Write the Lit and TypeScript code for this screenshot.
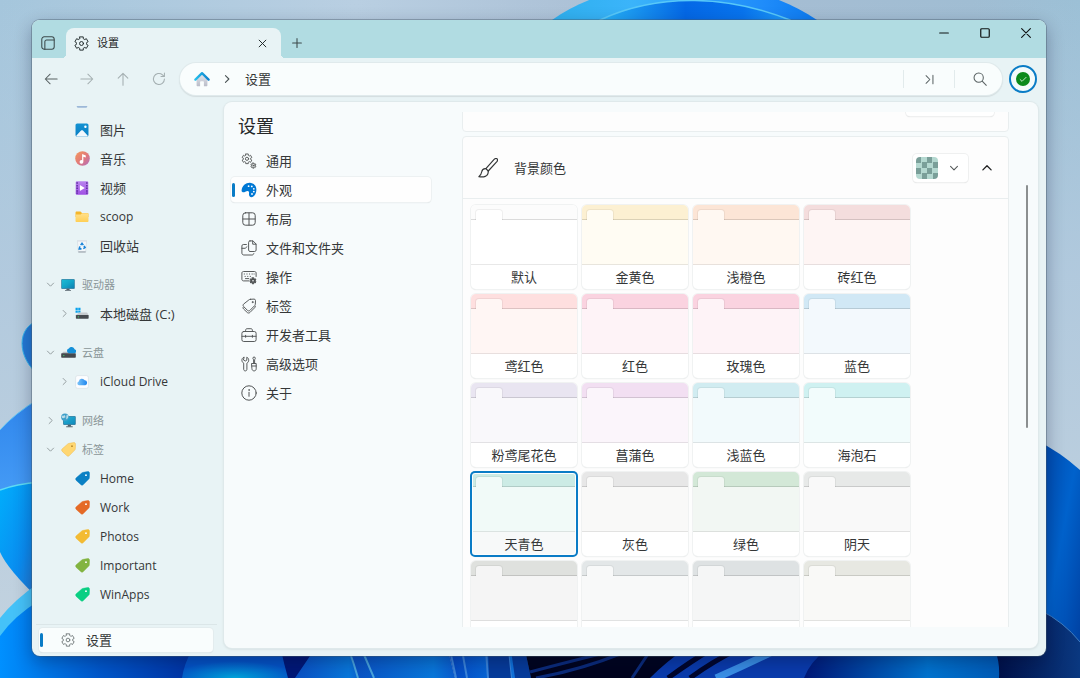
import { LitElement, html, svg, css, nothing, type TemplateResult } from "lit";
import { customElement, property, state } from "lit/decorators.js";
import { classMap } from "lit/directives/class-map.js";
import { styleMap } from "lit/directives/style-map.js";

/* ---------- shared styles ---------- */

const base = css`
  *,
  *::before,
  *::after {
    box-sizing: border-box;
  }
  :host {
    font-family: "Open Sans", "Noto Sans CJK SC", sans-serif;
    font-size: 13px;
    line-height: 20px;
    color: #353738;
  }
  button {
    font: inherit;
    color: inherit;
    margin: 0;
    padding: 0;
    border: 0;
    background: none;
    text-align: left;
  }
  ul {
    list-style: none;
    margin: 0;
    padding: 0;
  }
  svg {
    display: block;
    flex: none;
  }
`;

/* ---------- icons ---------- */

const line = (body: TemplateResult, size = 16, width = 1) => html`
  <svg width=${size} height=${size} viewBox="0 0 16 16" fill="none" stroke="currentColor"
    stroke-width=${width} stroke-linecap="round" stroke-linejoin="round" aria-hidden="true">${body}</svg>`;

const art = (body: TemplateResult, size = 14) => html`
  <svg width=${size} height=${size} viewBox="0 0 16 16" aria-hidden="true">${body}</svg>`;

/** Outline of a six-toothed gear round (cx, cy). */
function gear(cx: number, cy: number, outer: number, inner: number): string {
  const at = (deg: number, r: number) => {
    const a = (deg * Math.PI) / 180;
    return `${(cx + r * Math.cos(a)).toFixed(2)} ${(cy + r * Math.sin(a)).toFixed(2)}`;
  };
  let d = "";
  for (let i = 0; i < 6; i++) {
    const m = i * 60 - 90;
    d += `${i ? "L" : "M"}${at(m - 15, outer)}L${at(m + 15, outer)}L${at(m + 20, inner)}Q${at(m + 30, inner - 0.2)} ${at(m + 40, inner)}`;
  }
  return d + "Z";
}

const gearIcon = (size: number) =>
  line(svg`<path d=${gear(8, 8, 7.3, 5.5)}/><circle cx="8" cy="8" r="2.1"/>`, size);

const chevron = {
  down: (size = 10, w = 1.6) => line(svg`<path d="M2.5 5.5 8 11l5.500-5.500"/>`, size, w),
  up: (size = 10, w = 1.6) => line(svg`<path d="M2.500 10.500 8 5l5.500 5.500"/>`, size, w),
  right: (size = 10, w = 1.6) => line(svg`<path d="M5.500 2.500 11 8l-5.500 5.500"/>`, size, w),
};

const navIcon: Record<string, TemplateResult> = {
  general: line(svg`
    <path d=${gear(6, 5.8, 5, 3.7)}/><circle cx="6" cy="5.800" r="1.600"/>
    <path d=${gear(12.4, 12.6, 2.6, 1.7)}/><circle cx="12.400" cy="12.600" r=".5"/>`, 16, 0.9),
  appearance: art(svg`
    <path d="M.6 8.600C1 3.600 5 .6 9 .8c3.600.2 6.400 3 6.400 6.800 0 4.200-2.200 7.600-4.800 7.600-2.200 0-2.800-1.800-2.600-3.600.2-1.500 0-2.600-1.400-2.700-1.500-.1-2.100 1.100-3.500 1.300C1.600 10.400.5 9.800.6 8.600Z" fill="#0078d4"/>
    <g fill="#fff"><circle cx="7.600" cy="4.200" r=".9"/><circle cx="10.800" cy="4.400" r=".9"/><circle cx="12.800" cy="6.800" r=".9"/><circle cx="12.800" cy="9.600" r=".9"/><circle cx="11" cy="12" r=".9"/></g>`, 16),
  layout: line(svg`<rect x="1.800" y="1.800" width="12.400" height="12.400" rx="2.600"/><path d="M8 2v12M2 8h12"/>`),
  files: line(svg`
    <path d="M9 .9h3l3.100 3.100v6.100c0 .8-.6 1.400-1.400 1.400H9c-.8 0-1.400-.6-1.400-1.400V2.300C7.600 1.500 8.200.9 9 .9Z"/>
    <path d="M11.700 1v3.200h3.200"/>
    <path d="M5.400 4.500H2.300C1.500 4.500.9 5.100.9 5.900V13c0 1.200.8 2 2 2h8c1 0 1.700-.5 1.900-1.400M.9 8.300h3.300L6 6.700"/>`, 16, 0.95),
  actions: line(svg`
    <path d="M8.200 11.900H2.400C1.600 11.900.9 11.200.9 10.400V4c0-.8.700-1.500 1.500-1.500h11.200c.8 0 1.500.7 1.500 1.500v3.500"/>
    <path d="M3.200 5h.3M5.800 5h.3M8.400 5h.3M11 5h.3M13 5h.2M4 7.400h.3M6.600 7.400h.3M9.200 7.400h.3M4.500 9.600h3.300"/>
    <path d=${gear(12, 11.8, 3.1, 2.2)} fill="currentColor"/><circle cx="12" cy="11.800" r=".8" fill="#f7fbfc" stroke="none"/>`, 16, 0.95),
  tags: line(svg`
    <path d="M9.500 1.300 13.100 1.100c.8 0 1.400.6 1.400 1.400l-.2 3.800c0 .5-.3 1-.6 1.300l-4.800 4.800c-.7.700-1.700.7-2.400 0L2.600 8.500c-.7-.7-.7-1.700 0-2.400l5.300-4.200c.4-.4 1-.6 1.600-.6Z"/>
    <path d="M2 9.500c0 .6.200 1.100.6 1.500l3.700 3.500c.7.700 1.900.7 2.600 0l4.700-4.700c.4-.4.600-.9.700-1.500"/>
    <circle cx="11.600" cy="4.100" r=".5"/>`, 16, 0.95),
  developer: line(svg`
    <rect x=".9" y="4.500" width="14.200" height="10" rx="1.800"/>
    <path d="M4.600 4.300V3.200c0-.9.600-1.500 1.500-1.500h3.800c.9 0 1.500.6 1.500 1.500v1.100M1 9.300h14M4.600 8.300v2M11.400 8.300v2"/>`, 16, 0.95),
  advanced: line(svg`
    <path d="M2.800 1.200C1.500 1.800.9 2.900.9 4.200c0 1.400.8 2.400 1.800 3v6.100c0 1 .7 1.600 1.600 1.600s1.600-.6 1.600-1.600V7.200c1-.6 1.800-1.600 1.800-3 0-1.300-.6-2.400-1.900-3v3L4.300 5 2.800 4.200Z"/>
    <path d="M12.600 7.200V3.800l-.7-1.200.5-1.500h1.400l.5 1.500-.7 1.200v3.400M10.900 7.500h4.300v5.300c0 1.200-.9 2.100-2.100 2.100s-2.200-.9-2.200-2.100ZM10.900 10h4.300"/>`, 16, 0.95),
  about: line(svg`<circle cx="8" cy="8" r="7.200"/><path d="M8 7.300v4"/><circle cx="8" cy="5" r=".3"/>`),
};

const tagIcon = (color: string, dot = "#fff", edge = color) => art(svg`
  <path d="M9 1.400 13.600.6c1-.1 1.900.6 1.900 1.700l-.2 4.800c0 .6-.2 1.100-.6 1.500l-5.800 5.900c-.8.800-2 .8-2.800 0L1.300 10c-.8-.8-.8-1.900 0-2.700L7.200 2.100c.5-.4 1.100-.6 1.800-.7Z" fill=${color} stroke=${edge} stroke-width=".5"/>
  <circle cx="11.700" cy="4.400" r="1" fill=${dot}/>`, 15);

const sideIcon: Record<string, TemplateResult> = {
  documents: art(svg`<rect x="2" y="1" width="12" height="14.600" rx="1.200" fill="#9cb8d8"/>`),
  pictures: art(svg`
    <defs><linearGradient id="pic" x2="0" y2="1"><stop stop-color="#1392d2"/><stop offset="1" stop-color="#0a7fc4"/></linearGradient></defs>
    <rect x=".6" y=".6" width="14.800" height="14.800" rx="1.800" fill="url(#pic)"/>
    <path d="M1.400 14.700 6.900 8.700c.7-.7 1.600-.7 2.200 0l5.500 6c-.3.400-.7.700-1.200.7H2.600c-.5 0-.9-.3-1.200-.7Z" fill="#f2f8fd"/>
    <circle cx="11.900" cy="4.200" r="1.400" fill="#fff"/>`),
  music: art(svg`
    <defs><linearGradient id="mus" x2="1" y2="1"><stop stop-color="#f59a5c"/><stop offset=".55" stop-color="#e0787c"/><stop offset="1" stop-color="#ad6fc4"/></linearGradient></defs>
    <circle cx="8" cy="8" r="7.800" fill="url(#mus)"/>
    <path d="M7.600 3.200v6.600a2 2 0 1 0 1.300 1.700V6l2.600.9V4.700Z" fill="#fff"/>`, 15),
  videos: art(svg`
    <defs><linearGradient id="vid" x2="0" y2="1"><stop stop-color="#b883ee"/><stop offset="1" stop-color="#a050e4"/></linearGradient></defs>
    <rect x=".8" y=".4" width="14.400" height="15.200" rx="1.400" fill="url(#vid)"/>
    <g fill="#5b2d9c"><path d="M1.600 1.500h1.700v1.700H1.600zM1.600 4.500h1.700v1.700H1.600zM1.600 7.500h1.700v1.700H1.600zM1.600 10.500h1.700v1.700H1.600zM1.600 13.200h1.700v1.500H1.600zM12.700 1.500h1.700v1.700h-1.700zM12.700 4.500h1.700v1.700h-1.700zM12.700 7.500h1.700v1.700h-1.700zM12.700 10.500h1.700v1.700h-1.700zM12.700 13.200h1.700v1.500h-1.700z"/></g>
    <path d="M5.600 4.700v6.600l5.600-3.300Z" fill="#fff"/>`),
  folder: art(svg`
    <defs><linearGradient id="fol" x2="0" y2="1"><stop stop-color="#ffe08c"/><stop offset="1" stop-color="#ffcf55"/></linearGradient></defs>
    <path d="M.6 3c0-.8.500-1.300 1.300-1.300h3.700c.4 0 .7.100 1 .4L8 3.400h6.200c.7 0 1.200.5 1.200 1.200V8H.6Z" fill="#f5b62b"/>
    <path d="M.6 5.200h5.300c.4 0 .8-.2 1-.4l1-1h6.300c.7 0 1.200.5 1.200 1.200v7.500c0 .7-.5 1.200-1.200 1.200H1.800c-.7 0-1.200-.5-1.200-1.200Z" fill="url(#fol)"/>`),
  bin: art(svg`
    <path d="M2.800 2.400h10.400l-1 12.200c0 .5-.5.900-1 .9H4.800c-.5 0-1-.4-1-.9Z" fill="#f3f6f9" stroke="#cfd8de" stroke-width=".7"/>
    <path d="M2.400 1.200h11.200v1.400H2.400Z" fill="#dbe2e8"/><path d="M3.800 14h8.400v1.500H3.800Z" fill="#a2adb5"/>
    <path d="M6.500 7 8 4.900 9.500 7M10.300 7.800l1.200 2-2 1.200M7.400 11.300H4.800l.8-2.900" fill="none" stroke="#1683d8" stroke-width="1.800"/>`),
  drives: art(svg`
    <defs><linearGradient id="mon" x2="1" y2="1"><stop stop-color="#1bbbd4"/><stop offset=".5" stop-color="#12a5c8"/><stop offset="1" stop-color="#0e7fb0"/></linearGradient></defs>
    <rect x=".4" y="1.400" width="15.200" height="10.800" rx=".6" fill="#0d6790"/><rect x="1" y="2" width="14" height="9.600" fill="url(#mon)"/>
    <path d="M6.500 12.200h3l.5 1.600H6ZM4.600 13.700h6.800v1H4.600Z" fill="#53606a"/>`),
  disk: art(svg`
    <path d="M.6.9h2.600v2.600H.6zM3.700.9h2.600v2.600H3.700zM.6 4h2.600v2.600H.6zM3.700 4h2.600v2.600H3.700z" fill="#0aa2ec"/>
    <path d="m2.800 7.600 2-1.200h9l1.600 2.800H1Z" fill="#c7ccd0"/><rect x="1" y="9" width="14.600" height="4.400" rx=".7" fill="#474b50"/><circle cx="3.800" cy="11.200" r=".7" fill="#3fdc6c"/>`),
  cloud: art(svg`
    <path d="M2.400 7.200h11.800l1.400 2.400H.4Z" fill="#b9bfc4"/><rect x=".2" y="8.800" width="15.600" height="4.800" rx=".7" fill="#45494e"/><circle cx="3" cy="11.300" r=".7" fill="#3fdc6c"/>
    <path d="M8.600 8.800a2.600 2.600 0 0 1-.2-5.100 3.400 3.400 0 0 1 6.100.9 2.200 2.200 0 0 1 .3 4.200Z" fill="#1590d8"/>`, 15),
  icloud: art(svg`
    <defs><linearGradient id="icl" x2="1"><stop stop-color="#7cc4f8"/><stop offset="1" stop-color="#1f86ee"/></linearGradient></defs>
    <rect x=".7" y=".7" width="14.600" height="14.600" rx="2.400" fill="#fcfdff" stroke="#d3dde2" stroke-width=".7"/>
    <path d="M4.600 11.600a2.200 2.200 0 0 1-.3-4.300 3.700 3.700 0 0 1 6.800-1.200 2.800 2.800 0 0 1 .7 5.500Z" fill="url(#icl)"/>`),
  network: art(svg`
    <defs><linearGradient id="net" x2="1" y2="1"><stop stop-color="#25b2d6"/><stop offset="1" stop-color="#0f88ba"/></linearGradient></defs>
    <rect x="2.400" y="3.400" width="13.200" height="9.200" rx=".5" fill="#0b5f88"/><rect x="3" y="4" width="12" height="8" fill="url(#net)"/>
    <path d="M7.400 12.600h3l.6 1.800H7Z" fill="#53606a"/><path d="M5.500 14.200h7v1h-7Z" fill="#53606a"/>
    <circle cx="4.200" cy="4.600" r="4" fill="#3f9fc9"/><path d="M1 2.700c1.600.6 2.400 0 3.200-.7l.6 2.400-2.200 1.200L1 5ZM5.500 6.800l2-1.600.4-2.200-1.700-1.500-.4 1.500Z" fill="#b8dbe8"/>`, 15),
  tags: tagIcon("#ffd772", "#b98b2e", "#eeb94a"),
};

/* ---------- wallpaper ---------- */

@customElement("desktop-wallpaper")
export class DesktopWallpaper extends LitElement {
  static styles = css`
    :host {
      display: block;
    }
    svg {
      display: block;
      width: 100%;
      height: 100%;
    }
  `;

  render() {
    return html`
      <svg viewBox="0 0 1080 678" preserveAspectRatio="none" aria-hidden="true">
        <defs>
          <linearGradient id="sky" x2="1"><stop stop-color="#a5c6dc"/><stop offset=".33" stop-color="#b9cfe2"/><stop offset=".6" stop-color="#a8bdd3"/><stop offset=".9" stop-color="#a0bdd3"/><stop offset="1" stop-color="#9cc0d6"/></linearGradient>
          <linearGradient id="haze" x2="0" y2="1"><stop stop-color="#b4cbdf" stop-opacity="0"/><stop offset=".4" stop-color="#b3cade" stop-opacity=".9"/><stop offset="1" stop-color="#c4d3df"/></linearGradient>
          <linearGradient id="bloom" x2="1"><stop stop-color="#2fb0ee"/><stop offset=".3" stop-color="#3bb4fa"/><stop offset=".8" stop-color="#1f8cfa"/><stop offset="1" stop-color="#0c7af0"/></linearGradient>
          <linearGradient id="core" x2="1"><stop stop-color="#28b4f8"/><stop offset=".45" stop-color="#0468e6"/><stop offset=".75" stop-color="#0874ee"/><stop offset="1" stop-color="#1f9cfa"/></linearGradient>
          <linearGradient id="petal" x2="0" y2="1"><stop stop-color="#2f86ec"/><stop offset="1" stop-color="#469cf6"/></linearGradient>
          <linearGradient id="petal2" x2="1" y2="1"><stop stop-color="#00aefc"/><stop offset=".6" stop-color="#0a8cf0"/><stop offset="1" stop-color="#2e74c8"/></linearGradient>
          <linearGradient id="floor" x2="1"><stop stop-color="#0090ff"/><stop offset=".5" stop-color="#0058cc"/><stop offset="1" stop-color="#0030a0"/></linearGradient>
          <radialGradient id="glow" cx=".5" cy="1" r=".6"><stop stop-color="#00a4dc"/><stop offset="1" stop-color="#0454c8"/></radialGradient>
          <linearGradient id="rib" x2="1"><stop stop-color="#0a50c4"/><stop offset=".8" stop-color="#0878dc"/><stop offset="1" stop-color="#0a5cd0"/></linearGradient>
          <linearGradient id="rib2" x2="1"><stop stop-color="#0448c4"/><stop offset=".7" stop-color="#0874e0"/><stop offset="1" stop-color="#2a6ccc"/></linearGradient>
          <linearGradient id="east" x2="1" y2="1"><stop stop-color="#0046a8"/><stop offset=".5" stop-color="#0062cc"/><stop offset="1" stop-color="#003c9c"/></linearGradient>
          <linearGradient id="southeast" x2="1"><stop stop-color="#001878"/><stop offset=".6" stop-color="#0074d0"/><stop offset="1" stop-color="#0058b4"/></linearGradient>
          <linearGradient id="night" x2="1"><stop stop-color="#001048"/><stop offset="1" stop-color="#0a3880"/></linearGradient>
        </defs>
        <rect width="1080" height="678" fill="url(#sky)"/>
        <rect width="1080" height="678" fill="url(#haze)"/>
        <path d="M552 20C620-28 740-32 817 20V60H552Z" fill="url(#bloom)"/>
        <path d="M600 20C660-8 730-4 790 20V40H600Z" fill="url(#core)" stroke="#58c8f8" stroke-width="1.500"/>
        <path d="M40 320C16 326 16 358 40 376Z" fill="#2479d4" stroke="#36b4ec"/>
        <path d="M0 430Q14 414 40 398V500H0Z" fill="url(#petal)"/>
        <path d="M0 430Q14 414 40 398" fill="none" stroke="#5cc4f4"/>
        <path d="M0 490Q16 484 40 482V600Q8 570 0 552Z" fill="url(#petal2)"/>
        <path d="M0 490Q16 484 40 482" fill="none" stroke="#5fdcf4" stroke-width="1.500"/>
        <path d="M0 618Q14 600 40 582V678H0Z" fill="#45c2f8"/>
        <path d="M0 636Q14 616 40 600V650H200V678H0Z" fill="url(#floor)"/>
        <rect x="190" y="650" width="130" height="28" fill="#001878"/>
        <path d="M182 678Q184 664 192 650H281Q284 664 288 678Z" fill="url(#glow)"/>
        <path d="M295 678Q306 662 314 650H352L362 678Z" fill="url(#rib)"/>
        <path d="M348 650H448L455 678H358Z" fill="url(#rib)"/>
        <path d="M349 650Q354 664 358 678M362 650Q368 664 374 678" fill="none" stroke="#4aa6e0" stroke-width="2"/>
        <path d="M448 650H526L532 678H455Z" fill="url(#rib2)"/>
        <path d="M450 650 456 678M462 650l5 28M486 650l2 28M508 650l3 28" fill="none" stroke="#3c86dc" stroke-width="2"/>
        <path d="M488 650h20l3 28h-22ZM511 650h14l6 28h-16Z" fill="#063c9c"/>
        <path d="M525 650H690V678H531Z" fill="#00041e"/>
        <path d="M530 672Q560 664 600 654M536 678Q580 670 620 654M632 678l16-24" fill="none" stroke="#0b2c7c" stroke-width="3"/>
        <path d="M650 678Q668 660 684 650H840V678Z" fill="#0a3cae"/>
        <path d="M668 678Q690 662 710 650M690 678Q712 662 736 650" fill="none" stroke="#00062c" stroke-width="5"/>
        <path d="M716 678Q748 664 776 650" fill="none" stroke="#3a90e8" stroke-width="7"/>
        <path d="M804 678Q810 662 826 650H1010V678Z" fill="url(#southeast)"/>
        <path d="M1036 440Q1060 452 1080 470V678H1036Z" fill="url(#east)"/>
        <path d="M999 678Q1000 662 995 650H1036V608Q1062 620 1080 642V678Z" fill="url(#night)"/>
        <path d="M1040 610Q1064 622 1080 642" fill="none" stroke="#3f7cc0"/>
      </svg>
    `;
  }
}

/* ---------- title bar ---------- */

@customElement("title-bar")
export class TitleBar extends LitElement {
  static styles = [
    base,
    css`
      :host {
        display: flex;
        align-items: flex-start;
        height: 38px;
        background: #b1dce2;
        color: #1c2526;
      }
      .panes,
      .add,
      .caption {
        display: grid;
        place-items: center;
      }
      .panes,
      .add {
        width: 34px;
        height: 30px;
        margin-top: 8px;
        padding-right: 2px;
        color: #3c494b;
      }
      .tab {
        position: relative;
        display: flex;
        align-items: center;
        gap: 8px;
        width: 215px;
        height: 30px;
        margin-top: 8px;
        padding: 0 14px 0 8px;
        border-radius: 8px 8px 0 0;
        background: #e8f3f5;
        font-size: 11px;
      }
      .tab::before,
      .tab::after {
        content: "";
        position: absolute;
        bottom: 0;
        width: 4px;
        height: 4px;
      }
      .tab::before {
        left: -4px;
        background: radial-gradient(circle at 0 0, transparent 4px, #e8f3f5 4px);
      }
      .tab::after {
        right: -4px;
        background: radial-gradient(circle at 100% 0, transparent 4px, #e8f3f5 4px);
      }
      .name {
        flex: 1;
      }
      .captions {
        display: flex;
        margin-left: auto;
      }
      .caption {
        width: 41px;
        height: 26px;
        color: #101414;
      }
    `,
  ];

  render() {
    return html`
      <button class="panes" aria-label="窗格">
        ${line(svg`<rect x=".9" y=".9" width="14.200" height="14.200" rx="2.800"/><path d="M4.400 15V6.600c0-1.200.8-2 2-2H15"/>`, 14, 1.2)}
      </button>
      <div class="tab">
        ${gearIcon(15)}
        <span class="name">设置</span>
        <button aria-label="关闭标签页">${line(svg`<path d="m2 2 12 12M14 2 2 14"/>`, 9, 1.7)}</button>
      </div>
      <button class="add" aria-label="新建标签页">${line(svg`<path d="M8 1v14M1 8h14"/>`, 10, 1.7)}</button>
      <div class="captions">
        <button class="caption" aria-label="最小化">${line(svg`<path d="M1 8h14"/>`, 10, 1.7)}</button>
        <button class="caption" aria-label="最大化">${line(svg`<rect x="1.200" y="1.200" width="13.600" height="13.600" rx="1.500"/>`, 10, 1.9)}</button>
        <button class="caption" aria-label="关闭">${line(svg`<path d="m1 1 14 14M15 1 1 15"/>`, 10, 1.8)}</button>
      </div>
    `;
  }
}

/* ---------- navigation toolbar ---------- */

@customElement("nav-toolbar")
export class NavToolbar extends LitElement {
  static styles = [
    base,
    css`
      :host {
        display: flex;
        align-items: center;
        height: 42px;
        padding: 0 9px 0 1px;
      }
      .tool {
        display: grid;
        place-items: center;
        width: 36px;
        height: 32px;
        color: #596263;
      }
      .tool:disabled,
      .tool.refresh {
        color: #a4afb1;
      }
      .address {
        display: flex;
        align-items: center;
        flex: 1;
        height: 32px;
        margin: 0 7px 0 3px;
        padding-left: 14px;
        border-radius: 16px;
        background: #f9fdfd;
        box-shadow: 0 0 0 1px #e0eaec, 0 1px 1px 1px #d3dddf;
      }
      .crumb {
        margin-left: 13px;
      }
      .arrow {
        margin-left: 12px;
        color: #4a5354;
      }
      .tail {
        display: flex;
        margin-left: auto;
      }
      .tail .tool {
        width: 51px;
        height: 18px;
        border-left: 1px solid #e2ebec;
      }
      .tail .tool:last-child {
        width: 48px;
        padding-left: 3px;
      }
      .status {
        display: grid;
        place-items: center;
        width: 28px;
        height: 28px;
        border: 2px solid #0a7cc6;
        border-radius: 50%;
        background: #f3fbfb;
      }
    `,
  ];

  render() {
    return html`
      <button class="tool" aria-label="后退">${line(svg`<path d="M1.500 8h13.500M7 2.500 1.500 8 7 13.500"/>`, 14, 1.2)}</button>
      <button class="tool" aria-label="前进" disabled>${line(svg`<path d="M1 8h13.500M9 2.500 14.500 8 9 13.500"/>`, 14, 1.2)}</button>
      <button class="tool" aria-label="向上" disabled>${line(svg`<path d="M8 15V1.500M2.500 7 8 1.500 13.500 7"/>`, 14, 1.2)}</button>
      <button class="tool refresh" aria-label="刷新">${line(svg`<path d="M14.200 8A6.300 6.300 0 1 1 12 3.200l1.800 1.700M14.200 1.300v3.900h-3.900"/>`, 14, 1.2)}</button>
      <nav class="address" aria-label="地址栏">
        ${art(svg`
          <defs><linearGradient id="wall" x2="0" y2="1"><stop stop-color="#e6e8ee"/><stop offset="1" stop-color="#b9bcc8"/></linearGradient>
          <linearGradient id="roof" x2="1"><stop stop-color="#25c0ec"/><stop offset="1" stop-color="#0f80cc"/></linearGradient></defs>
          <path d="M2.600 7.500 8 2.600l5.400 4.900v6.800c0 .6-.4 1-1 1H9.900v-4.300c0-.4-.3-.7-.7-.7H6.800c-.4 0-.7.3-.7.700v4.300H3.600c-.6 0-1-.4-1-1Z" fill="url(#wall)"/>
          <path d="M1.400 8.600 8 2.200l6.600 6.400" fill="none" stroke="url(#roof)" stroke-width="2.300" stroke-linecap="round" stroke-linejoin="round"/>`, 16)}
        <span class="arrow">${chevron.right(10, 1.7)}</span>
        <span class="crumb">设置</span>
        <div class="tail">
          <button class="tool" aria-label="展开">${line(svg`<path d="M3 2.500 8.500 8 3 13.500M13 2v12"/>`, 11, 1.5)}</button>
          <button class="tool" aria-label="搜索">${line(svg`<circle cx="6.500" cy="6.500" r="5.300"/><path d="m10.500 10.500 4.700 4.700"/>`, 14, 1.2)}</button>
        </div>
      </nav>
      <button class="status" aria-label="状态">
        ${art(svg`<circle cx="8" cy="8" r="8" fill="#0b8a1c"/><path d="m4.400 8.300 2.500 2.400 4.900-4.900" fill="none" stroke="#d7f2da" stroke-width="1"/>`, 14)}
      </button>
    `;
  }
}

/* ---------- sidebar ---------- */

interface SideEntry {
  label: string;
  icon: TemplateResult;
  group?: "open" | "closed";
  child?: boolean;
  spaced?: boolean;
}

const sideEntries: SideEntry[] = [
  { label: "", icon: sideIcon.documents },
  { label: "图片", icon: sideIcon.pictures },
  { label: "音乐", icon: sideIcon.music },
  { label: "视频", icon: sideIcon.videos },
  { label: "scoop", icon: sideIcon.folder },
  { label: "回收站", icon: sideIcon.bin },
  { label: "驱动器", icon: sideIcon.drives, group: "open", spaced: true },
  { label: "本地磁盘 (C:)", icon: sideIcon.disk, child: true },
  { label: "云盘", icon: sideIcon.cloud, group: "open", spaced: true },
  { label: "iCloud Drive", icon: sideIcon.icloud, child: true },
  { label: "网络", icon: sideIcon.network, group: "closed", spaced: true },
  { label: "标签", icon: sideIcon.tags, group: "open" },
  { label: "Home", icon: tagIcon("#0a80c4") },
  { label: "Work", icon: tagIcon("#e56a26") },
  { label: "Photos", icon: tagIcon("#f3bb33") },
  { label: "Important", icon: tagIcon("#82b440") },
  { label: "WinApps", icon: tagIcon("#0acf83") },
];

@customElement("files-sidebar")
export class FilesSidebar extends LitElement {
  static styles = [
    base,
    css`
      :host {
        display: flex;
        flex-direction: column;
        min-height: 0;
        padding: 4px 7px 4px 4px;
      }
      .scroll {
        flex: 1;
        min-height: 0;
        overflow: hidden;
      }
      .list {
        display: flex;
        flex-direction: column;
        gap: 4px;
        margin-top: -18px;
      }
      .spaced {
        margin-top: 10px;
      }
      .item {
        display: flex;
        align-items: center;
        width: 100%;
        height: 25px;
        padding-left: 23px;
        font-size: 12px;
      }
      .cjk {
        font-size: 13px;
      }
      .twist {
        display: grid;
        place-items: center;
        width: 10px;
        margin-right: 5px;
        color: #7f898b;
      }
      .glyph {
        display: grid;
        place-items: center;
        width: 16px;
        margin-right: 10px;
      }
      .group {
        padding-left: 9px;
        font-size: 11px;
        color: #8a9698;
      }
      .group .glyph {
        margin-right: 6px;
      }
      .footer {
        padding: 3px 4px 0 3px;
        border-top: 1px solid #dbe6e8;
      }
      .settings {
        display: flex;
        align-items: center;
        width: 100%;
        height: 24px;
        padding-left: 1px;
        border-radius: 4px;
        background: #f9fdfd;
        box-shadow: 0 0 0 1px #e3ecee, 0 1px 1px #ccd6d8;
      }
      .settings svg {
        margin: 0 11px 0 18px;
        color: #6b7475;
      }
      .mark {
        width: 3px;
        height: 14px;
        border-radius: 2px;
        background: #0a7cc6;
      }
    `,
  ];

  private row(e: SideEntry) {
    return html`
      <li class=${classMap({ spaced: !!e.spaced })}>
        <button class=${classMap({ item: true, group: !!e.group, cjk: !e.group && /[\u4e00-\u9fff]/.test(e.label) })}
          aria-expanded=${e.group ? String(e.group === "open") : nothing}>
          <span class="twist">${e.group === "open" ? chevron.down(9, 1.4) : e.group || e.child ? chevron.right(9, 1.4) : nothing}</span>
          <span class="glyph">${e.icon}</span>
          <span>${e.label}</span>
        </button>
      </li>
    `;
  }

  render() {
    return html`
      <nav class="scroll" aria-label="侧边栏">
        <ul class="list">${sideEntries.map((e) => this.row(e))}</ul>
      </nav>
      <div class="footer">
        <button class="settings"><span class="mark"></span>${gearIcon(14)}<span>设置</span></button>
      </div>
    `;
  }
}

/* ---------- settings navigation ---------- */

const pages: [string, string][] = [
  ["general", "通用"],
  ["appearance", "外观"],
  ["layout", "布局"],
  ["files", "文件和文件夹"],
  ["actions", "操作"],
  ["tags", "标签"],
  ["developer", "开发者工具"],
  ["advanced", "高级选项"],
  ["about", "关于"],
];

@customElement("settings-nav")
export class SettingsNav extends LitElement {
  @state() private current = "appearance";

  static styles = [
    base,
    css`
      :host {
        display: block;
      }
      .title {
        margin: 0;
        padding: 10px 0 8px 7px;
        font-size: 18px;
        line-height: 28px;
        font-weight: 400;
        color: #242627;
      }
      .pages {
        display: flex;
        flex-direction: column;
        gap: 4px;
      }
      .page {
        display: flex;
        align-items: center;
        width: 100%;
        height: 25px;
        border-radius: 4px;
      }
      .page svg {
        margin: 0 9px 0 6px;
        color: #505354;
      }
      .mark {
        width: 3px;
        height: 14px;
        margin-left: 1px;
        border-radius: 2px;
      }
      .current {
        background: #fefefe;
        box-shadow: 0 0 0 1px #edf1f2, 0 1px 1px #d2d8d9;
      }
      .current .mark {
        background: #0a7cc6;
      }
    `,
  ];

  render() {
    return html`
      <h1 class="title">设置</h1>
      <nav>
        <ul class="pages">
          ${pages.map(([id, label]) => html`
            <li>
              <button class=${classMap({ page: true, current: id === this.current })}
                aria-current=${id === this.current ? "page" : nothing}
                @click=${() => (this.current = id)}>
                <span class="mark"></span>${navIcon[id]}<span>${label}</span>
              </button>
            </li>`)}
        </ul>
      </nav>
    `;
  }
}

/* ---------- background colour expander ---------- */

interface Swatch {
  name: string;
  strip: string;
  fill: string;
}

const swatches: Swatch[] = [
  { name: "默认", strip: "#fcfcfc", fill: "#ffffff" },
  { name: "金黄色", strip: "#fcf0d2", fill: "#fffcf3" },
  { name: "浅橙色", strip: "#fce5d6", fill: "#fff8f2" },
  { name: "砖红色", strip: "#f4dddd", fill: "#fef5f4" },
  { name: "鸢红色", strip: "#fedfdf", fill: "#fff6f4" },
  { name: "红色", strip: "#fad3e0", fill: "#fef3f7" },
  { name: "玫瑰色", strip: "#fad3e0", fill: "#fef3f7" },
  { name: "蓝色", strip: "#d1e8f5", fill: "#f3f9fd" },
  { name: "粉鸢尾花色", strip: "#e9e5f1", fill: "#f9f8fb" },
  { name: "菖蒲色", strip: "#f2dff2", fill: "#fbf5fb" },
  { name: "浅蓝色", strip: "#d1ecf1", fill: "#f2fafc" },
  { name: "海泡石", strip: "#cff1f1", fill: "#f2fcfc" },
  { name: "天青色", strip: "#ccebe5", fill: "#f1faf8" },
  { name: "灰色", strip: "#e7e7e7", fill: "#f9f9f8" },
  { name: "绿色", strip: "#d3e8d7", fill: "#f2f7f3" },
  { name: "阴天", strip: "#e7e9e8", fill: "#f9f9f9" },
  { name: "暴风雨", strip: "#dfe1de", fill: "#f5f5f5" },
  { name: "蓝灰色", strip: "#e3e7e8", fill: "#f8f9f9" },
  { name: "深灰色", strip: "#dee2e3", fill: "#f5f6f6" },
  { name: "迷彩色", strip: "#e7e8e2", fill: "#f9f9f7" },
];

@customElement("background-expander")
export class BackgroundExpander extends LitElement {
  @property({ attribute: false }) swatches: Swatch[] = [];
  @state() private selected = "天青色";

  static styles = [
    base,
    css`
      :host {
        display: block;
        border: 1px solid #e9eeef;
        border-radius: 4px;
        background: #fdfdfd;
      }
      .header {
        display: flex;
        align-items: center;
        height: 62px;
        padding: 0 15px;
        border-bottom: 1px solid #e9eeef;
      }
      .heading {
        flex: 1;
        margin: 0 0 0 16px;
        font-size: 13px;
        font-weight: 400;
      }
      .picker {
        display: flex;
        align-items: center;
        gap: 11px;
        width: 55px;
        height: 28px;
        padding-left: 3px;
        border-radius: 4px;
        background: #fff;
        box-shadow: 0 0 0 1px #eff0f0, 0 1px 1px #d4d6d6;
        color: #55595a;
      }
      .checker {
        width: 22px;
        height: 22px;
        border-radius: 4px;
        background: repeating-conic-gradient(#b4d8d0 0 25%, #7a9f99 0 50%) 0 0 / 11px 11px;
      }
      .toggle {
        margin-left: 13px;
        color: #1d1e1f;
      }
      .grid {
        display: grid;
        grid-template-columns: repeat(auto-fill, 106px);
        gap: 5px;
        margin: 0;
        padding: 6px 8px;
        border: 0;
      }
      .swatch {
        position: relative;
        display: block;
        height: 84px;
        border-radius: 5px;
        overflow: hidden;
        background: #fff;
        box-shadow: 0 0 0 1px #f0f2f2, 0 1px 1px #d9dcdc;
      }
      .radio {
        position: absolute;
        inset: 0;
        margin: 0;
        opacity: 0;
      }
      .preview {
        height: 60px;
        border-bottom: 1px solid rgba(0, 0, 0, 0.09);
      }
      .strip {
        display: flex;
        align-items: flex-end;
        height: 15px;
        padding-left: 4px;
        border-bottom: 1px solid rgba(0, 0, 0, 0.13);
      }
      .flap {
        width: 28px;
        height: 11px;
        margin-bottom: -1px;
        border: 1px solid rgba(0, 0, 0, 0.05);
        border-bottom: 0;
        border-radius: 4px 4px 0 0;
        background-clip: padding-box;
      }
      .caption {
        display: block;
        line-height: 24px;
        text-align: center;
      }
      .chosen {
        overflow: visible;
        background: #f7f9f9;
      }
      .chosen::after {
        content: "";
        position: absolute;
        inset: -1px;
        border: 2px solid #0a7cc6;
        border-radius: 5px;
        box-shadow: inset 0 0 0 1px #fdfefe;
      }
    `,
  ];

  render() {
    return html`
      <div class="header">
        ${line(svg`
          <path d="M15.300.7c-.7-.6-1.700-.3-2.400.4L6.300 8.500l1.900 1.900 6.900-7.500c.6-.7.700-1.600.2-2.200Z"/>
          <path d="M6.300 8.500C4.500 8.300 3.300 9.400 3 11c-.3 1.700-.7 2.700-2.300 3.900 3.300.7 7.700.2 7.500-4.500"/>`, 20, 0.95)}
        <h2 class="heading">背景颜色</h2>
        <button class="picker" aria-label="背景颜色" aria-haspopup="listbox">
          <span class="checker"></span>${chevron.down(10, 1.7)}
        </button>
        <button class="toggle" aria-label="折叠" aria-expanded="true">${chevron.up(12, 1.7)}</button>
      </div>
      <fieldset class="grid" aria-label="背景颜色">
        ${this.swatches.map((s) => html`
          <label class=${classMap({ swatch: true, chosen: s.name === this.selected })}>
            <input class="radio" type="radio" name="background" .checked=${s.name === this.selected}
              @change=${() => (this.selected = s.name)} />
            <div class="preview" style=${styleMap({ backgroundColor: s.fill })}>
              <div class="strip" style=${styleMap({ backgroundColor: s.strip })}>
                <span class="flap" style=${styleMap({ backgroundColor: s.fill })}></span>
              </div>
            </div>
            <span class="caption">${s.name}</span>
          </label>`)}
      </fieldset>
    `;
  }
}

/* ---------- application ---------- */

@customElement("app-root")
export class AppRoot extends LitElement {
  static styles = [
    base,
    css`
      :host {
        position: relative;
        display: block;
        height: 100vh;
        padding: 20px 34px 22px 32px;
        overflow: hidden;
        box-sizing: border-box;
      }
      .wallpaper {
        position: absolute;
        inset: 0;
      }
      .window {
        position: relative;
        display: flex;
        flex-direction: column;
        height: 100%;
        border-radius: 8px;
        background: #e8f3f5;
        box-shadow: 0 0 0 1px rgba(70, 90, 105, 0.4), 0 6px 18px rgba(0, 10, 40, 0.32);
      }
      .bar {
        border-radius: 8px 8px 0 0;
      }
      .body {
        display: grid;
        grid-template-columns: 192px minmax(0, 1fr);
        flex: 1;
        min-height: 0;
        padding: 2px 8px 8px 0;
      }
      .side {
        margin-bottom: -8px;
      }
      .panel {
        display: grid;
        grid-template-columns: 200px minmax(0, 1fr) 2px;
        min-height: 0;
        padding: 0 10px 0 7px;
        border-radius: 8px;
        background: #f7fbfc;
        box-shadow: 0 0 0 1px #dfe9eb, 0 1px 2px 1px #d9e3e5;
      }
      .content {
        display: flex;
        flex-direction: column;
        gap: 4px;
        min-height: 0;
        margin: 10px 17px 21px 31px;
        overflow: hidden;
      }
      .setting {
        display: flex;
        flex: none;
        align-items: center;
        justify-content: flex-end;
        height: 62px;
        margin-top: -42px;
        padding-right: 14px;
        border: 1px solid #e9eeef;
        border-radius: 4px;
        background: #fdfdfd;
      }
      .choice {
        width: 88px;
        height: 29px;
        border-radius: 4px;
        background: #fff;
        box-shadow: 0 0 0 1px #eff0f0, 0 1px 1px #d4d6d6;
      }
      .expander {
        flex: none;
      }
      .thumb {
        height: 243px;
        margin-top: 83px;
        border-radius: 1px;
        background: #8b8f90;
      }
    `,
  ];

  render() {
    return html`
      <desktop-wallpaper class="wallpaper"></desktop-wallpaper>
      <div class="window">
        <title-bar class="bar"></title-bar>
        <nav-toolbar></nav-toolbar>
        <div class="body">
          <files-sidebar class="side"></files-sidebar>
          <main class="panel">
            <settings-nav></settings-nav>
            <div class="content">
              <div class="setting"><button class="choice" aria-label="主题"></button></div>
              <background-expander class="expander" .swatches=${swatches}></background-expander>
            </div>
            <div class="thumb"></div>
          </main>
        </div>
      </div>
    `;
  }
}
